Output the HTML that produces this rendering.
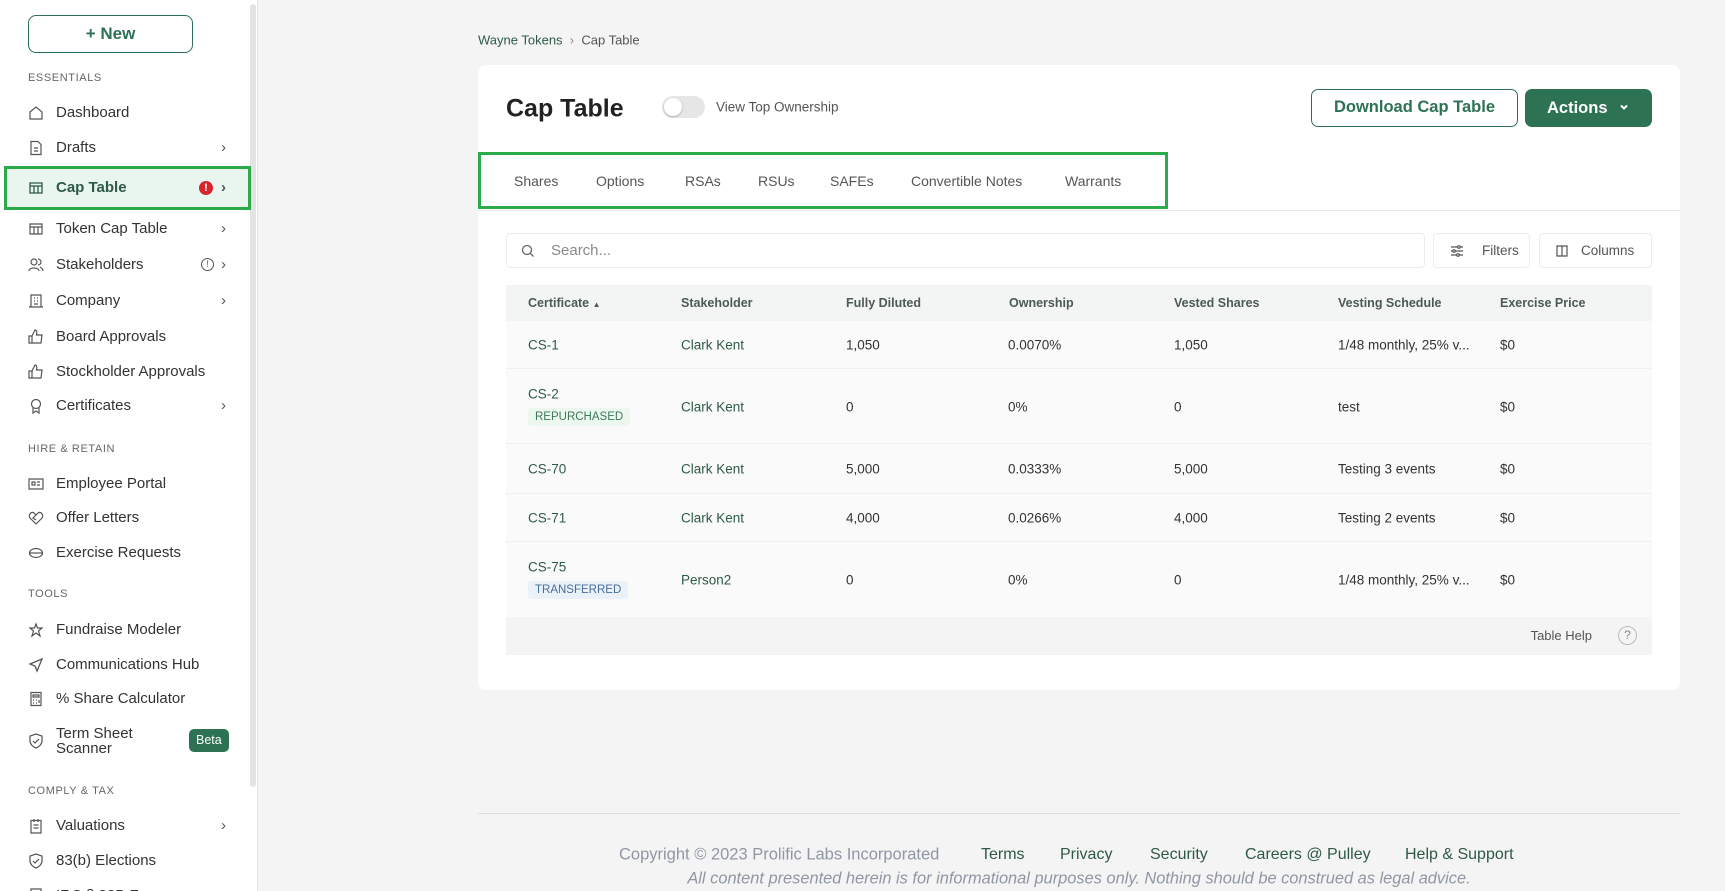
<!DOCTYPE html>
<html><head><meta charset="utf-8"><style>
*{box-sizing:border-box;margin:0;padding:0}
html{width:1725px;height:891px;overflow:hidden}
body{width:1725px;height:891px;overflow:hidden;background:#f4f4f4;font-family:"Liberation Sans",sans-serif;position:relative;color:#333}
.a{position:absolute}
#side{left:0;top:0;width:258px;height:891px;background:#fff;border-right:1px solid #e6e6e6;overflow:hidden}
.sb{left:250px;top:4px;width:6px;height:783px;background:#e3e3e3;border-radius:3px}
.new{left:28px;top:15px;width:165px;height:38px;border:1.5px solid #2e7154;border-radius:8px;color:#2e7154;font-weight:bold;font-size:17px;text-align:center;line-height:35px}
.sec{left:28px;font-size:11px;color:#666;letter-spacing:.6px;transform:translateY(-50%)}
.it{left:0;width:250px;height:30px;transform:translateY(-50%);font-size:15px;color:#333;line-height:30px}
.it .t{position:absolute;left:56px}
.it svg{position:absolute;left:28px;top:7px}
.it .ch{position:absolute;left:221px;top:0;color:#555;font-size:15px}
.hl{left:4px;top:166px;width:247px;height:44px;border:3px solid #2cab4a;background:#e9f6ef}
.card{left:478px;top:65px;width:1202px;height:625px;background:#fff;border-radius:8px}
.tab{top:181px;transform:translateY(-50%);font-size:14px;color:#555}
.th{top:303px;transform:translateY(-50%);font-size:12.5px;font-weight:bold;color:#4d5a53}
.row{left:506px;width:1146px;background:#fafafa;border-bottom:1px solid #efefef}
.c{position:absolute;font-size:13.5px;color:#333;transform:translateY(-50%)}
.g{color:#2f5a45}
.bd{position:absolute;font-size:11.5px;padding:3px 7px;border-radius:3px}
.fl{top:855px;transform:translateY(-50%);font-size:15px;color:#2f5a45}
</style></head><body>
<div id="side" class="a">
<div class="a sb"></div>
<div class="a new">+ New</div>
<div class="a sec" style="top:78px">ESSENTIALS</div>
<div class="a hl"></div>
<div class="a it" style="top:113px"><svg width="16" height="16" viewBox="0 0 16 16" fill="none" stroke="#555" stroke-width="1.2"><path d="M2 7L8 2L14 7V14H2Z"/></svg><span class="t">Dashboard</span></div>
<div class="a it" style="top:148px"><svg width="16" height="16" viewBox="0 0 16 16" fill="none" stroke="#555" stroke-width="1.2"><path d="M3 1.5H10L13 4.5V14.5H3Z M6 8H10 M6 11H10"/></svg><span class="t">Drafts</span><span class="ch">›</span></div>
<div class="a it" style="top:188px;font-weight:bold;color:#2f5a45"><svg width="16" height="16" viewBox="0 0 16 16" fill="none" stroke="#2f5a45" stroke-width="1.3"><path d="M2 3H14V13H2Z M2 6H14 M6 6V13 M10 6V13"/></svg><span class="t">Cap Table</span><span style="position:absolute;left:199px;top:8px;width:14px;height:14px;border-radius:50%;background:#d7262b;color:#fff;font-size:11px;line-height:14px;text-align:center">!</span><span class="ch">›</span></div>
<div class="a it" style="top:229px"><svg width="16" height="16" viewBox="0 0 16 16" fill="none" stroke="#555" stroke-width="1.2"><path d="M2 3H14V13H2Z M2 6H14 M6 6V13 M10 6V13"/></svg><span class="t">Token Cap Table</span><span class="ch">›</span></div>
<div class="a it" style="top:265px"><svg width="16" height="16" viewBox="0 0 16 16" fill="none" stroke="#555" stroke-width="1.2"><circle cx="6" cy="5" r="3"/><path d="M1 14C1 10 11 10 11 14 M10 2A3 3 0 0 1 10 8 M12 10C14 11 15 12 15 14"/></svg><span class="t">Stakeholders</span><span style="position:absolute;left:201px;top:8px;width:13px;height:13px;border:1.3px solid #555;border-radius:50%;font-size:9px;line-height:11px;text-align:center;color:#555">!</span><span class="ch">›</span></div>
<div class="a it" style="top:301px"><svg width="16" height="16" viewBox="0 0 16 16" fill="none" stroke="#555" stroke-width="1.2"><path d="M3 2H13V14H3Z M1 14H15 M6 5H7 M9 5H10 M6 8H7 M9 8H10 M6 11H10"/></svg><span class="t">Company</span><span class="ch">›</span></div>
<div class="a it" style="top:337px"><svg width="16" height="16" viewBox="0 0 16 16" fill="none" stroke="#555" stroke-width="1.2"><path d="M1 7H4V14H1Z M4 7L7 1C9 1 9 3 8.5 6H14L13 14H4"/></svg><span class="t">Board Approvals</span></div>
<div class="a it" style="top:372px"><svg width="16" height="16" viewBox="0 0 16 16" fill="none" stroke="#555" stroke-width="1.2"><path d="M1 7H4V14H1Z M4 7L7 1C9 1 9 3 8.5 6H14L13 14H4"/></svg><span class="t">Stockholder Approvals</span></div>
<div class="a it" style="top:406px"><svg width="16" height="16" viewBox="0 0 16 16" fill="none" stroke="#555" stroke-width="1.2"><circle cx="8" cy="6" r="4.5"/><path d="M5 10V15L8 13L11 15V10"/></svg><span class="t">Certificates</span><span class="ch">›</span></div>
<div class="a sec" style="top:449px">HIRE &amp; RETAIN</div>
<div class="a it" style="top:484px"><svg width="16" height="16" viewBox="0 0 16 16" fill="none" stroke="#555" stroke-width="1.2"><path d="M1 3H15V13H1Z M4 6H7V9H4Z M9 6H12 M9 9H12"/></svg><span class="t">Employee Portal</span></div>
<div class="a it" style="top:518px"><svg width="16" height="16" viewBox="0 0 16 16" fill="none" stroke="#555" stroke-width="1.2"><path d="M8 14L2 8C0 5 3 1 6 3L8 5L10 3C13 1 16 5 14 8Z M8 5L5 8L8 10"/></svg><span class="t">Offer Letters</span></div>
<div class="a it" style="top:553px"><svg width="16" height="16" viewBox="0 0 16 16" fill="none" stroke="#555" stroke-width="1.2"><ellipse cx="8" cy="8" rx="6.5" ry="4.5"/><path d="M1.5 8H14.5"/></svg><span class="t">Exercise Requests</span></div>
<div class="a sec" style="top:594px">TOOLS</div>
<div class="a it" style="top:630px"><svg width="16" height="16" viewBox="0 0 16 16" fill="none" stroke="#555" stroke-width="1.2"><path d="M8 2L9.5 6H14L10.5 9L12 14L8 11L4 14L5.5 9L2 6H6.5Z"/></svg><span class="t">Fundraise Modeler</span></div>
<div class="a it" style="top:665px"><svg width="16" height="16" viewBox="0 0 16 16" fill="none" stroke="#555" stroke-width="1.3"><path d="M14 2L2 7L7 9L9 14Z"/></svg><span class="t">Communications Hub</span></div>
<div class="a it" style="top:699px"><svg width="16" height="16" viewBox="0 0 16 16" fill="none" stroke="#555" stroke-width="1.2"><path d="M3 1.5H13V14.5H3Z M5 4H11V6H5Z M5 9H6 M8 9H9 M5 12H6 M8 12H9 M11 9V12"/></svg><span class="t">% Share Calculator</span></div>
<div class="a it" style="top:741px;height:36px;line-height:15px"><svg width="16" height="16" viewBox="0 0 16 16" fill="none" stroke="#555" stroke-width="1.2" style="top:10px"><path d="M8 1L14 3V8C14 11 11 14 8 15C5 14 2 11 2 8V3Z M5 8L7 10L11 6"/></svg><span class="t" style="top:3px">Term Sheet<br>Scanner</span><span style="position:absolute;left:189px;top:6px;background:#2d7353;color:#fff;border-radius:5px;font-size:12.5px;padding:4px 7px;line-height:15px">Beta</span></div>
<div class="a sec" style="top:791px">COMPLY &amp; TAX</div>
<div class="a it" style="top:826px"><svg width="16" height="16" viewBox="0 0 16 16" fill="none" stroke="#555" stroke-width="1.2"><path d="M3 2.5H13V15H3Z M6 1V4 M10 1V4 M5.5 7H10.5 M5.5 10H10.5"/></svg><span class="t">Valuations</span><span class="ch">›</span></div>
<div class="a it" style="top:861px"><svg width="16" height="16" viewBox="0 0 16 16" fill="none" stroke="#555" stroke-width="1.2"><path d="M8 1L14 3V8C14 11 11 14 8 15C5 14 2 11 2 8V3Z M5 8L7 10L11 6"/></svg><span class="t">83(b) Elections</span></div>
<div class="a it" style="top:896px"><svg width="16" height="16" viewBox="0 0 16 16" fill="none" stroke="#555" stroke-width="1.2"><path d="M3 1H13V15H3Z"/></svg><span class="t">IRC § 83B Forms</span></div>
</div>

<div class="a" style="left:478px;top:40px;transform:translateY(-50%);font-size:13px;color:#555"><span style="color:#2f5a45">Wayne Tokens</span>&nbsp;&nbsp;<span style="color:#888">›</span>&nbsp;&nbsp;Cap Table</div>
<div class="a card"></div>
<div class="a" style="left:506px;top:109px;transform:translateY(-50%);font-size:25px;font-weight:bold;color:#222">Cap Table</div>
<div class="a" style="left:662px;top:96px;width:43px;height:22px;border-radius:11px;background:#e6e6e6"><div style="position:absolute;left:2px;top:2px;width:18px;height:18px;border-radius:50%;background:#fff;box-shadow:0 1px 2px rgba(0,0,0,.25)"></div></div>
<div class="a" style="left:716px;top:107px;transform:translateY(-50%);font-size:13.5px;color:#555">View Top Ownership</div>
<div class="a" style="left:1311px;top:89px;width:207px;height:38px;border:1.3px solid #2e7154;border-radius:7px;color:#2e7154;font-size:16.5px;font-weight:bold;text-align:center;line-height:35px">Download Cap Table</div>
<div class="a" style="left:1525px;top:89px;width:127px;height:38px;border-radius:7px;background:#2d7353;color:#fff;font-size:16.5px;font-weight:bold;line-height:38px;padding-left:22px">Actions <svg width="12" height="12" viewBox="0 0 12 12" style="margin-left:6px"><path d="M3 4.5L6 7.5L9 4.5" stroke="#fff" stroke-width="2" fill="none"/></svg></div>
<div class="a" style="left:478px;top:152px;width:690px;height:57px;border:3px solid #2cab4a"></div>
<div class="a tab" style="left:514px">Shares</div>
<div class="a tab" style="left:596px">Options</div>
<div class="a tab" style="left:685px">RSAs</div>
<div class="a tab" style="left:758px">RSUs</div>
<div class="a tab" style="left:830px">SAFEs</div>
<div class="a tab" style="left:911px">Convertible Notes</div>
<div class="a tab" style="left:1065px">Warrants</div>
<div class="a" style="left:1168px;top:210px;width:512px;height:1px;background:#e6e6e6"></div>
<div class="a" style="left:478px;top:210px;width:690px;height:1px;background:#e6e6e6"></div>

<div class="a" style="left:506px;top:233px;width:919px;height:35px;border:1px solid #ececec;border-radius:4px"><svg width="14" height="14" viewBox="0 0 14 14" style="position:absolute;left:14px;top:10px" fill="none" stroke="#666" stroke-width="1.3"><circle cx="6" cy="6" r="4.5"/><path d="M9.5 9.5L12.5 12.5"/></svg><span style="position:absolute;left:44px;top:8px;font-size:15px;color:#888">Search...</span></div>
<div class="a" style="left:1433px;top:233px;width:97px;height:35px;border:1px solid #ececec;border-radius:4px;font-size:13.5px;color:#555;line-height:33px;padding-left:48px"><svg width="14" height="14" viewBox="0 0 14 14" style="position:absolute;left:16px;top:10px" fill="none" stroke="#555" stroke-width="1.2"><path d="M1 3H13 M1 7H13 M1 11H13"/><circle cx="9" cy="3" r="1.3" fill="#fff"/><circle cx="4" cy="7" r="1.3" fill="#fff"/><circle cx="8" cy="11" r="1.3" fill="#fff"/></svg>Filters</div>
<div class="a" style="left:1539px;top:233px;width:113px;height:35px;border:1px solid #ececec;border-radius:4px;font-size:13.5px;color:#555;line-height:33px;padding-left:41px"><svg width="14" height="14" viewBox="0 0 14 14" style="position:absolute;left:15px;top:10px" fill="none" stroke="#555" stroke-width="1.2"><path d="M2 2H12V12H2Z M7 2V12"/></svg>Columns</div>

<div class="a" style="left:506px;top:285px;width:1146px;height:36px;background:#f3f5f4"></div>
<div class="a th" style="left:528px">Certificate <span style="font-size:8px">▲</span></div>
<div class="a th" style="left:681px">Stakeholder</div>
<div class="a th" style="left:846px">Fully Diluted</div>
<div class="a th" style="left:1009px">Ownership</div>
<div class="a th" style="left:1174px">Vested Shares</div>
<div class="a th" style="left:1338px">Vesting Schedule</div>
<div class="a th" style="left:1500px">Exercise Price</div>

<div class="a row" style="top:321px;height:48px">
<span class="c g" style="left:22px;top:24px">CS-1</span><span class="c g" style="left:175px;top:24px">Clark Kent</span><span class="c" style="left:340px;top:24px">1,050</span><span class="c" style="left:502px;top:24px">0.0070%</span><span class="c" style="left:668px;top:24px">1,050</span><span class="c" style="left:832px;top:24px">1/48 monthly, 25% v...</span><span class="c" style="left:994px;top:24px">$0</span></div>
<div class="a row" style="top:369px;height:75px">
<span class="c g" style="left:22px;top:25px">CS-2</span><span class="bd" style="left:22px;top:39px;background:#ecf7f0;color:#3d7a58">REPURCHASED</span><span class="c g" style="left:175px;top:38px">Clark Kent</span><span class="c" style="left:340px;top:38px">0</span><span class="c" style="left:502px;top:38px">0%</span><span class="c" style="left:668px;top:38px">0</span><span class="c" style="left:832px;top:38px">test</span><span class="c" style="left:994px;top:38px">$0</span></div>
<div class="a row" style="top:444px;height:50px">
<span class="c g" style="left:22px;top:25px">CS-70</span><span class="c g" style="left:175px;top:25px">Clark Kent</span><span class="c" style="left:340px;top:25px">5,000</span><span class="c" style="left:502px;top:25px">0.0333%</span><span class="c" style="left:668px;top:25px">5,000</span><span class="c" style="left:832px;top:25px">Testing 3 events</span><span class="c" style="left:994px;top:25px">$0</span></div>
<div class="a row" style="top:494px;height:48px">
<span class="c g" style="left:22px;top:24px">CS-71</span><span class="c g" style="left:175px;top:24px">Clark Kent</span><span class="c" style="left:340px;top:24px">4,000</span><span class="c" style="left:502px;top:24px">0.0266%</span><span class="c" style="left:668px;top:24px">4,000</span><span class="c" style="left:832px;top:24px">Testing 2 events</span><span class="c" style="left:994px;top:24px">$0</span></div>
<div class="a row" style="top:542px;height:75px;border-bottom:none">
<span class="c g" style="left:22px;top:25px">CS-75</span><span class="bd" style="left:22px;top:39px;background:#eaf1f8;color:#466f9a">TRANSFERRED</span><span class="c g" style="left:175px;top:38px">Person2</span><span class="c" style="left:340px;top:38px">0</span><span class="c" style="left:502px;top:38px">0%</span><span class="c" style="left:668px;top:38px">0</span><span class="c" style="left:832px;top:38px">1/48 monthly, 25% v...</span><span class="c" style="left:994px;top:38px">$0</span></div>
<div class="a" style="left:506px;top:617px;width:1146px;height:38px;background:#f3f4f3"><span style="position:absolute;right:60px;top:11px;font-size:13px;color:#555">Table Help</span><span style="position:absolute;right:15px;top:9px;width:19px;height:19px;border:1px solid #bbb;border-radius:50%;font-size:12px;color:#888;text-align:center;line-height:17px">?</span></div>

<div class="a" style="left:478px;top:813px;width:1202px;height:1px;background:#dcdde3"></div>
<div class="a fl" style="left:619px;color:#9097a3;font-size:16.5px">Copyright © 2023 Prolific Labs Incorporated</div>
<div class="a fl" style="left:981px;font-size:16px">Terms</div>
<div class="a fl" style="left:1060px;font-size:16px">Privacy</div>
<div class="a fl" style="left:1150px;font-size:16px">Security</div>
<div class="a fl" style="left:1245px;font-size:16px">Careers @ Pulley</div>
<div class="a fl" style="left:1405px;font-size:16px">Help &amp; Support</div>
<div class="a" style="left:478px;width:1202px;top:879px;transform:translateY(-50%);text-align:center;font-size:16.4px;font-style:italic;color:#9097a3">All content presented herein is for informational purposes only. Nothing should be construed as legal advice.</div>
</body></html>
